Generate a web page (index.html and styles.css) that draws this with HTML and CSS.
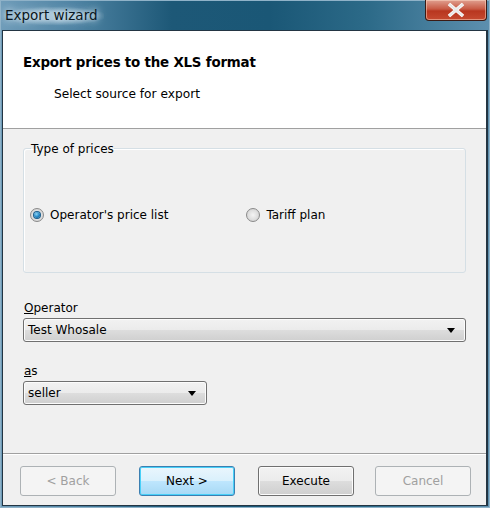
FILE: index.html
```html
<!DOCTYPE html>
<html>
<head>
<meta charset="utf-8">
<link rel="stylesheet" href="styles.css">
</head>
<body>
<div class="window">
  <div class="titlebar">
    <span class="title">Export wizard</span>
    <div class="close">
      <svg width="24" height="16" viewBox="0 0 24 16"><path d="M5 2 L19 14 M19 2 L5 14" stroke="#ffffff" stroke-width="3.6" stroke-linecap="butt"/><path d="M5 2 L19 14 M19 2 L5 14" stroke="#e8e8e8" stroke-width="2"/></svg>
    </div>
  </div>
  <div class="client">
    <div class="header">
      <div class="h-title">Export prices to the XLS format</div>
      <div class="h-sub">Select source for export</div>
    </div>
    <div class="body">
      <fieldset class="group">
        <legend>Type of prices</legend>
        <div class="radios">
          <label class="radio"><span class="dot checked"></span>Operator's price list</label>
          <label class="radio second"><span class="dot"></span>Tariff plan</label>
        </div>
      </fieldset>
      <div class="field">
        <div class="lbl"><u>O</u>perator</div>
        <div class="combo wide"><span>Test Whosale</span><span class="arrow"></span></div>
      </div>
      <div class="field as">
        <div class="lbl"><u>a</u>s</div>
        <div class="combo narrow"><span>seller</span><span class="arrow"></span></div>
      </div>
    </div>
    <div class="footer">
      <div class="btn disabled">&lt; Back</div>
      <div class="btn default">Next &gt;</div>
      <div class="btn exec">Execute</div>
      <div class="btn disabled last">Cancel</div>
    </div>
  </div>
</div>
</body>
</html>
```

FILE: styles.css
```css
* { box-sizing: border-box; }
html, body { margin: 0; padding: 0; }
body {
  width: 490px; height: 508px; overflow: hidden;
  font-family: "DejaVu Sans", sans-serif;
  font-size: 12px;
  color: #000;
}
.window {
  width: 490px; height: 508px;
  display: flex; flex-direction: column;
  background: linear-gradient(90deg, #6f9cb9 0%, #4f84a4 15%, #1d5877 35%, #1a5776 55%, #2c6a88 75%, #5d8fae 100%);
  border: 1px solid #8fb2c8;
  padding: 0 1px 1px 1px;
}
.titlebar {
  height: 29px; flex: none;
  display: flex; align-items: flex-start; justify-content: space-between;
}
.title {
  margin: 6px 0 0 2px;
  font-size: 13.5px;
  color: #0a1620;
  text-shadow: 0 0 6px #d8e8f0, 0 0 10px #c8dce8;
  background: radial-gradient(ellipse at center, rgba(220,235,245,0.55) 30%, rgba(220,235,245,0) 75%);
  padding: 0 6px 2px 1px;
}
.close {
  width: 62px; height: 21px; margin-top: -1px; margin-right: 1px;
  border: 1px solid #3b1a14;
  border-top: none;
  border-radius: 0 0 4px 4px;
  background: linear-gradient(180deg, #e0a090 0%, #c85a44 45%, #b8361f 55%, #c64a30 100%);
  display: flex; align-items: center; justify-content: center;
  box-shadow: inset 0 0 0 1px rgba(255,220,200,0.5);
}
.client {
  flex: 1;
  display: flex; flex-direction: column;
  border: 1px solid #233543;
  border-right-width: 2px;
  background: #f0f0f0;
}
.header {
  background: #fff;
  height: 98px; flex: none;
  border-bottom: 1px solid #a0a0a0;
  padding: 24px 0 0 20px;
}
.h-title { font-weight: bold; font-size: 13.4px; letter-spacing: -0.2px; }
.h-sub { margin: 17px 0 0 31px; font-size: 12.2px; }
.body {
  flex: 1;
  padding: 12px 20px 0 20px;
}
.group {
  margin: 0; padding: 0;
  height: 132px;
  border: 1px solid #d5dfe5;
  border-radius: 3px;
  box-shadow: inset 1px 1px 0 #fff;
}
.group legend { padding: 0; margin-left: 7px; position: relative; top: 1px; }
.radios { display: flex; margin-top: 53px; padding-left: 6px; }
.radio { display: flex; align-items: center; gap: 6px; }
.radio.second { margin-left: 78px; }
.dot {
  width: 14px; height: 14px; border-radius: 50%;
  border: 1px solid #8a8a8a;
  background: radial-gradient(circle at 50% 50%, #f4f4f4 0%, #dcdcdc 60%, #c8c8c8 100%);
  display: inline-block; position: relative;
}
.dot.checked::after {
  content: ""; position: absolute; left: 3px; top: 3px;
  width: 6px; height: 6px; border-radius: 50%;
  background: radial-gradient(circle at 40% 35%, #8fd4f4 0%, #1e84c4 55%, #0a4a78 100%);
  box-shadow: 0 0 0 1px #1a5d8c;
}
.field { margin-top: 28px; }
.field.as { margin-top: 22px; }
.lbl { margin-left: 1px; margin-bottom: 3px; line-height: 14px; }
.combo {
  height: 24px;
  border: 1px solid #707070;
  border-radius: 3px;
  background: linear-gradient(180deg, #f2f2f2 0%, #ebebeb 50%, #dddddd 51%, #cfcfcf 100%);
  box-shadow: inset 0 0 0 1px #fcfcfc;
  display: flex; align-items: center; justify-content: space-between;
  padding: 0 10px 0 4px;
}
.combo.wide { width: 443px; }
.combo.narrow { width: 184px; }
.arrow {
  width: 0; height: 0;
  border-left: 4px solid transparent; border-right: 4px solid transparent;
  border-top: 5px solid #000;
}
.footer {
  height: 52px; flex: none;
  border-top: 1px solid #a0a0a0;
  box-shadow: inset 0 1px 0 #fff;
  display: flex; align-items: flex-start;
  padding: 12px 0 0 17px;
}
.btn {
  width: 96px; height: 30px;
  border-radius: 3px;
  display: flex; align-items: center; justify-content: center;
  margin-right: 23px;
}
.btn.last { margin-right: 0; margin-left: -2px; }
.btn.disabled {
  border: 1px solid #adb2b5;
  background: #f4f4f4;
  color: #a0a0a0;
}
.btn.default {
  border: 1px solid #3c7fb1;
  background: linear-gradient(180deg, #eaf6fd 0%, #d9f0fc 50%, #bee6fd 51%, #a7d9f5 100%);
  box-shadow: inset 0 0 0 1px #48d0f8;
}
.btn.exec {
  border: 1px solid #707070;
  background: linear-gradient(180deg, #f2f2f2 0%, #ebebeb 50%, #dddddd 51%, #cfcfcf 100%);
  box-shadow: inset 0 0 0 1px #fcfcfc;
}
```
